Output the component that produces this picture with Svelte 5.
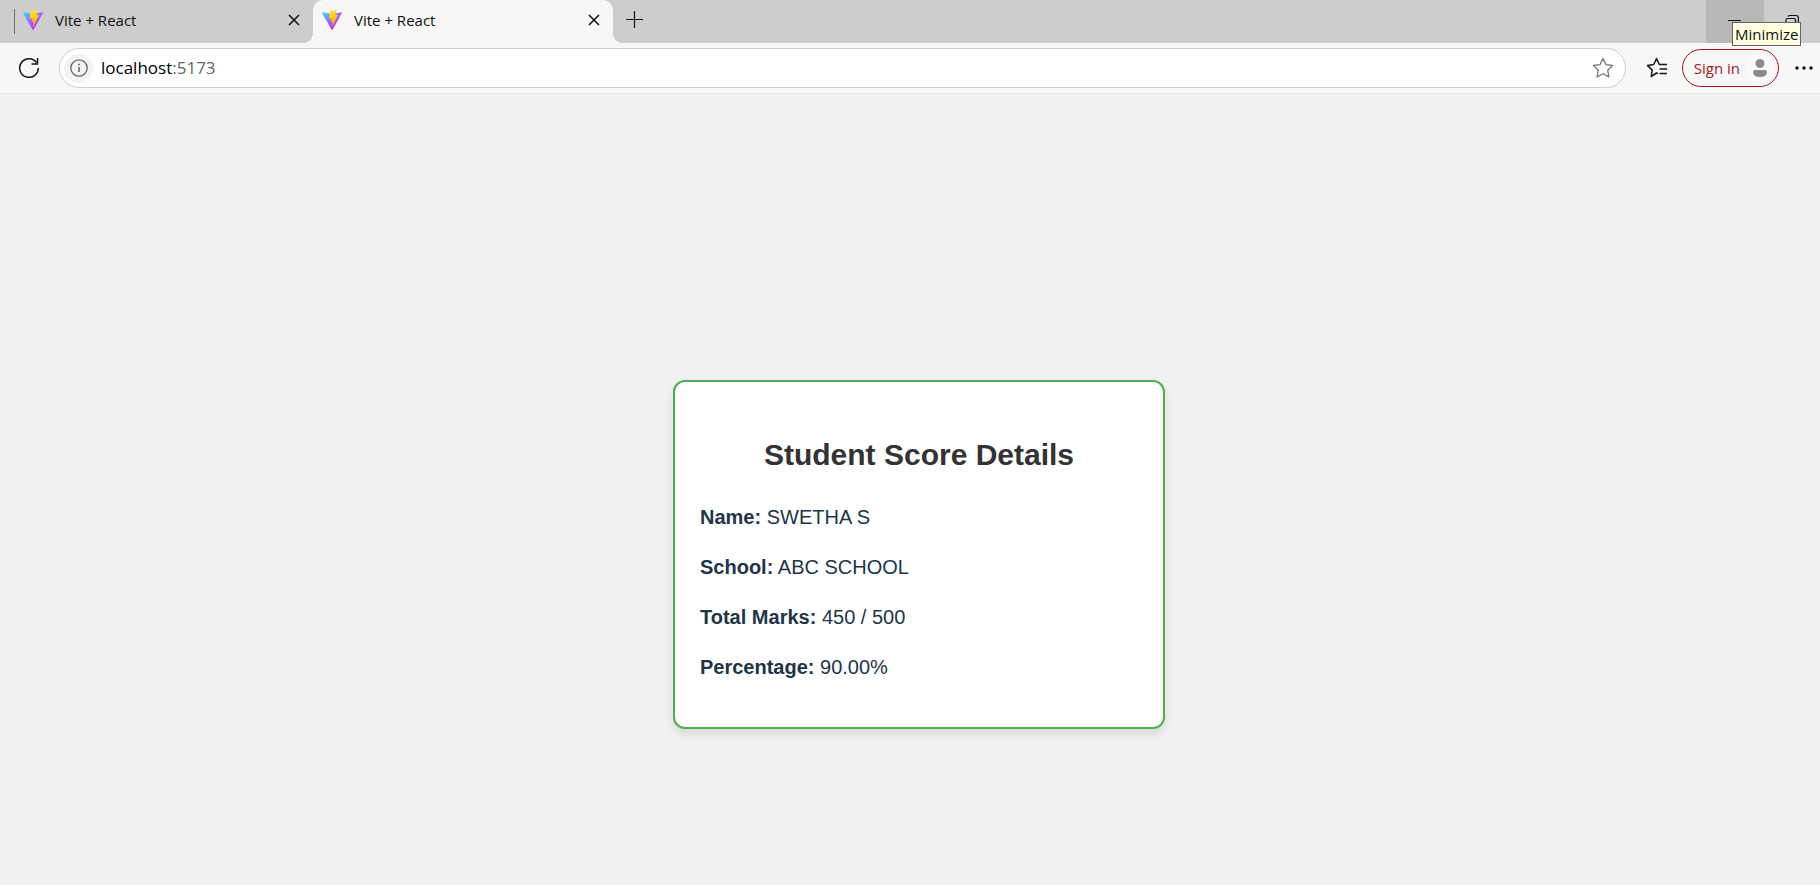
<script>
  const tabs = [
    { id: 1, title: 'Vite + React', active: false },
    { id: 2, title: 'Vite + React', active: true }
  ];
  const student = { name: 'SWETHA S', school: 'ABC SCHOOL', total: 450, max: 500 };
  const percentage = ((student.total / student.max) * 100).toFixed(2);
</script>

<div class="browser">
  <header>
    <div class="strip">
      <span class="divider"></span>
      {#each tabs as tab (tab.id)}
        <div class="tab" class:active={tab.active}>
          <svg class="logo" width="20" height="20" viewBox="0 0 256 257" aria-hidden="true">
            <defs>
              <linearGradient id="body{tab.id}" x1="-.8%" x2="57.6%" y1="7.7%" y2="78.4%">
                <stop offset="0%" stop-color="#41D1FF" /><stop offset="100%" stop-color="#BD34FE" />
              </linearGradient>
              <linearGradient id="bolt{tab.id}" x1="43.4%" x2="50.3%" y1="2.2%" y2="89%">
                <stop offset="0%" stop-color="#FFEA83" /><stop offset="8.3%" stop-color="#FFDD35" /><stop offset="100%" stop-color="#FFA800" />
              </linearGradient>
            </defs>
            <path fill="url(#body{tab.id})" d="M255.153 37.938L134.897 252.976c-2.483 4.44-8.862 4.466-11.382.048L.875 37.958c-2.746-4.814 1.371-10.646 6.827-9.67l120.385 21.517a6.537 6.537 0 0 0 2.322-.004l117.867-21.483c5.438-.991 9.574 4.796 6.877 9.62Z" />
            <path fill="url(#bolt{tab.id})" d="M185.432.063L96.44 17.501a3.268 3.268 0 0 0-2.634 3.014l-5.474 92.456a3.268 3.268 0 0 0 3.997 3.378l24.777-5.718c2.318-.535 4.413 1.507 3.936 3.838l-7.361 36.047c-.495 2.426 1.782 4.5 4.151 3.78l15.304-4.649c2.372-.72 4.652 1.36 4.15 3.788l-11.698 56.621c-.732 3.542 3.979 5.473 5.943 2.437l1.313-2.028l72.516-144.72c1.215-2.423-.88-5.186-3.54-4.672l-25.505 4.922c-2.396.462-4.435-1.77-3.759-4.114l16.646-57.705c.677-2.35-1.37-4.583-3.769-4.113Z" />
          </svg>
          <span class="title">{tab.title}</span>
          <button class="close" aria-label="Close tab">
            <svg width="12" height="12" viewBox="0 0 12 12"><path d="M1 1l10 10M11 1L1 11" stroke="#111" stroke-width="1.5" /></svg>
          </button>
        </div>
      {/each}
      <button class="new" aria-label="New tab">
        <svg width="18" height="18" viewBox="0 0 18 18"><path d="M9.5 1v17M1 9.5h17" stroke="#111" stroke-width="1.2" /></svg>
      </button>
      <div class="window">
        <button class="minimize" aria-label="Minimize">
          <svg width="14" height="14" viewBox="0 0 14 14"><path d="M0 6.5h13" stroke="#111" /></svg>
          <span class="tooltip">Minimize</span>
        </button>
        <button aria-label="Restore">
          <svg width="14" height="14" viewBox="0 0 14 14" fill="none" stroke="#111" stroke-width="1.2"><rect x="1" y="4.500" width="9.500" height="9" rx="1.500" /><path d="M3 2.500Q3.500 1.500 5 1.500h6q2.400 0 2.400 2.400v6" /></svg>
        </button>
      </div>
    </div>

    <div class="toolbar">
      <button class="refresh" aria-label="Refresh">
        <svg width="22" height="22" viewBox="0 0 22 22" fill="none" stroke="#151515" stroke-width="1.5"><path d="M18.500 5.500A9.300 9.300 0 1 0 20.300 11" /><path d="M19.500 1v6h-6" /></svg>
      </button>
      <div class="address">
        <button class="info" aria-label="View site information">
          <svg width="18" height="18" viewBox="0 0 18 18" fill="none" stroke="#666" stroke-width="1.3"><circle cx="9" cy="9" r="8.200" /><path d="M9 8v5" stroke-width="1.600" /><circle cx="9" cy="5.500" r=".9" fill="#666" stroke="none" /></svg>
        </button>
        <span class="url">localhost<span>:5173</span></span>
        <button class="star" aria-label="Add this page to favorites">
          <svg width="22" height="22" viewBox="0 0 22 22" fill="none" stroke="#777" stroke-width="1.3" stroke-linejoin="round"><path d="M11 1.500l2.900 6.100 6.700.9-4.900 4.700 1.200 6.700L11 16.700l-5.900 3.200 1.200-6.700L1.400 8.500l6.700-.9z" /></svg>
        </button>
      </div>
      <button class="favorites" aria-label="Favorites">
        <svg width="22" height="22" viewBox="0 0 22 22" fill="none" stroke="#151515" stroke-width="1.500" stroke-linejoin="round"><path d="M12 16.600l-1.500-.6-5.300 3.500 1-6.400L1.500 8.400l6.200-.9L10.500 1.500l2.800 6H21M13.500 12H21M13.500 16.500H21" /></svg>
      </button>
      <button class="signin">
        Sign in
        <span class="avatar">
          <svg width="16" height="18" viewBox="0 0 16 18" fill="#8a8a8a"><circle cx="8" cy="4.500" r="4.500" /><path d="M3 11h10q2 0 2 2 0 5-7 5t-7-5q0-2 2-2z" /></svg>
        </span>
      </button>
      <button class="more" aria-label="Settings and more">
        <svg width="18" height="4" viewBox="0 0 18 4" fill="#151515"><circle cx="2" cy="2" r="1.700" /><circle cx="9" cy="2" r="1.700" /><circle cx="16" cy="2" r="1.700" /></svg>
      </button>
    </div>
  </header>

  <main>
    <section class="card">
      <h2>Student Score Details</h2>
      <p><strong>Name:</strong> {student.name}</p>
      <p><strong>School:</strong> {student.school}</p>
      <p><strong>Total Marks:</strong> {student.total} / {student.max}</p>
      <p><strong>Percentage:</strong> {percentage}%</p>
    </section>
  </main>
</div>

<style>
  :global(body) { margin: 0; }
  * { box-sizing: border-box; }
  .browser {
    min-height: 100vh;
    display: flex;
    flex-direction: column;
    overflow: hidden;
    background: #f1f1f1;
    font-family: "Open Sans", "Noto Sans", sans-serif;
  }
  button {
    display: flex;
    align-items: center;
    justify-content: center;
    flex: none;
    padding: 0;
    border: 0;
    background: none;
    font: inherit;
    color: inherit;
  }
  svg { display: block; }
  .strip {
    display: flex;
    height: 43px;
    padding-left: 14px;
    background: #cdcdcd;
  }
  .divider {
    width: 1px;
    height: 25px;
    margin-top: 9px;
    background: #707070;
  }
  .tab {
    position: relative;
    display: flex;
    align-items: center;
    width: 298px;
    padding: 0 12px 3px 8px;
  }
  .tab.active {
    width: 300px;
    padding-left: 9px;
    border-radius: 10px 10px 0 0;
    background: #f7f7f7;
  }
  .tab.active::before,
  .tab.active::after {
    content: "";
    position: absolute;
    bottom: 0;
    width: 10px;
    height: 10px;
  }
  .tab.active::before {
    right: 100%;
    background: radial-gradient(circle at 0 0, transparent 10px, #f7f7f7 10px);
  }
  .tab.active::after {
    left: 100%;
    background: radial-gradient(circle at 100% 0, transparent 10px, #f7f7f7 10px);
  }
  .title {
    flex: 1;
    margin-left: 12px;
    font-size: 15px;
    line-height: 20px;
    color: #111;
  }
  .close { width: 14px; height: 20px; }
  .new { width: 42px; height: 38px; }
  .window { display: flex; margin-left: auto; }
  .window button { width: 56px; padding-bottom: 1px; }
  .window .minimize {
    position: relative;
    width: 58px;
    background: #b8b8b8;
  }
  .tooltip {
    position: absolute;
    z-index: 1;
    top: 22px;
    left: 26px;
    padding: 0 2px;
    border: 1px solid #646464;
    background: #ffffe1;
    color: #111;
    font-size: 15px;
    line-height: 22px;
  }
  .toolbar {
    display: flex;
    align-items: center;
    height: 51px;
    padding: 0 7px 0 18px;
    border-bottom: 1px solid #ececec;
    background: #f7f7f7;
  }
  .address {
    flex: 1;
    display: flex;
    align-items: center;
    height: 40px;
    margin: 0 20px 0 19px;
    padding: 0 11px 0 4px;
    border: 1px solid #cecece;
    border-radius: 20px;
    background: #fff;
  }
  .info {
    width: 29px;
    height: 29px;
    border-radius: 50%;
    background: #f3f3f3;
  }
  .url {
    flex: 1;
    margin-left: 8px;
    font-size: 17px;
    line-height: 24px;
    color: #000;
  }
  .url span { color: #666; }
  .signin {
    height: 38px;
    margin: 0 16px 0 14px;
    padding: 0 4px 0 11px;
    border: 1px solid #a4191f;
    border-radius: 19px;
    color: #a4191f;
    font-size: 15px;
    line-height: 20px;
  }
  .avatar {
    display: flex;
    align-items: center;
    justify-content: center;
    width: 28px;
    height: 28px;
    margin-left: 6px;
    border-radius: 50%;
    background: #fbfbfb;
  }
  main {
    flex: 1;
    display: flex;
    align-items: center;
    justify-content: center;
    padding: 130px 0 0 18px;
    font-family: "Liberation Sans", Arial, sans-serif;
  }
  .card {
    width: 492px;
    padding: 25px;
    border: 2px solid #4caf50;
    border-radius: 12px;
    background: #fff;
    box-shadow: 0 5px 10px rgba(0, 0, 0, 0.1);
  }
  h2 {
    margin: 27px 0 26px;
    text-align: center;
    font-size: 30px;
    line-height: 42px;
    color: #333;
  }
  p {
    margin: 20px 0;
    font-size: 20px;
    line-height: 30px;
    color: #213547;
  }
</style>
